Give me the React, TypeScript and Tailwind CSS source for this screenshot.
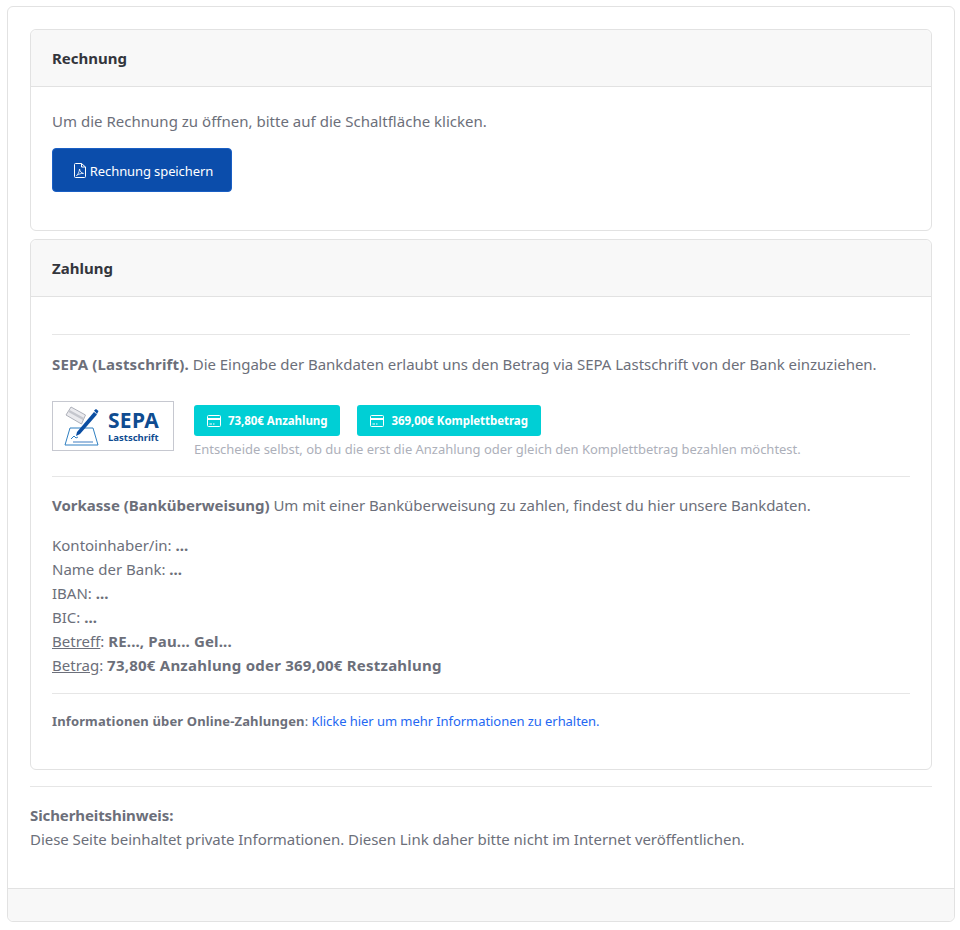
function FileIcon() {
  return (
    <svg width="12" height="15" viewBox="0 0 12 15" fill="none" stroke="currentColor" strokeWidth="1" className="shrink-0">
      <path d="M1.500 0.500h6l4 3.500v9.500a1 1 0 0 1-1 1h-9a1 1 0 0 1-1-1v-12a1 1 0 0 1 1-1z" />
      <path d="M7.500 0.500v3.500h4" />
      <path d="M2.500 12.500c1.500-1 2.800-3.500 3-6.500 .5 2.500 2 4.200 4 4.400-2-.2-5 .7-7 2.100z" strokeWidth="0.800" />
    </svg>
  );
}

function CardIcon() {
  return (
    <svg width="14" height="12" viewBox="0 0 14 12" fill="none" stroke="currentColor" className="shrink-0">
      <rect x="0.500" y="0.500" width="13" height="11" rx="1" />
      <path d="M1 4h12" strokeWidth="2" />
      <path d="M2.500 9h2.500M6 9h1.500" />
    </svg>
  );
}

function SepaLogo() {
  return (
    <div className="flex h-[50px] w-[122px] shrink-0 items-center border border-[#c6c8d0] bg-white">
      <svg width="55" height="48" viewBox="0 0 55 48" fill="none" className="shrink-0">
        <path d="M18 5l14.500 8-4 9L13 13z" fill="#eaeaee" stroke="#aeb1ba" />
        <path d="M16 9l14.500 8" stroke="#c4c6cd" strokeWidth="2.500" />
        <path d="M17 26h23l5 17H12z" fill="#fff" stroke="#2f7fc1" />
        <path d="M20 40h20" stroke="#7fa8d6" strokeWidth="1.500" />
        <path d="M23 34l1-4 17-20 3 2.500L27 32z" fill="#0b4ea2" />
        <path d="M41 8.500l2-1.500 2.500 2-1.500 3z" fill="#0b4ea2" />
        <path d="M18 37l3-3 2 2 2-1" stroke="#2f7fc1" />
      </svg>
      <div className="flex flex-col text-[#0f4c91]">
        <span className="h-[22px] text-[21px] leading-[22px] font-bold tracking-[0.3px]">SEPA</span>
        <span className="h-[13px] text-[9.500px] leading-[13px] font-bold">Lastschrift</span>
      </div>
    </div>
  );
}

function PayButton({ label }: { label: string }) {
  return (
    <button className="flex h-[31px] items-center gap-[7px] rounded-[3px] bg-[#00cfd5] px-[13px] text-[11.500px] font-bold tracking-[-0.05px] text-white">
      <CardIcon />
      {label}
    </button>
  );
}

export default function App() {
  return (
    <div className="h-[930px] bg-white pt-[6px] pr-[5px] pl-[7px] text-[15px] leading-[24px] text-[#6c6f7a] [font-family:'Noto_Sans',sans-serif]">
      <div className="flex h-[916px] flex-col rounded-[6px] border border-[#e2e2e2]">
        <div className="flex-1 px-[22px] pt-[22px]">
          <div className="h-[202px] rounded-[6px] border border-[#e2e2e2]">
            <div className="flex h-[57px] items-center rounded-t-[6px] border-b border-[#e2e2e2] bg-[#f8f8f8] px-[21px] text-[15px] font-bold text-[#33353c]">
              Rechnung
            </div>
            <div className="px-[21px] pt-[22px]">
              <p className="tracking-[0.015px]">Um die Rechnung zu öffnen, bitte auf die Schaltfläche klicken.</p>
              <button className="mt-[15px] flex h-[44px] w-[180px] items-center justify-center gap-[4px] rounded-[4px] border border-[#1a5fc4] bg-[#0b4dab] pt-[1px] pl-[3px] text-[13px] tracking-[-0.1px] text-white">
                <FileIcon />
                Rechnung speichern
              </button>
            </div>
          </div>

          <div className="mt-2 h-[531px] rounded-[6px] border border-[#e2e2e2]">
            <div className="flex h-[57px] items-center rounded-t-[6px] border-b border-[#e2e2e2] bg-[#f8f8f8] px-[21px] text-[15px] font-bold text-[#33353c]">
              Zahlung
            </div>
            <div className="px-[21px] pt-[37px]">
              <hr className="border-[#e6e6e6]" />
              <p className="mt-[17px] tracking-[-0.03px]">
                <b className="tracking-[0.16px]">SEPA (Lastschrift).</b> Die Eingabe der Bankdaten erlaubt uns den Betrag via SEPA Lastschrift von der Bank einzuziehen.
              </p>
              <div className="mt-[25px] flex gap-[20px]">
                <SepaLogo />
                <div className="pt-[4px]">
                  <div className="flex gap-[17px]">
                    <PayButton label="73,80€ Anzahlung" />
                    <PayButton label="369,00€ Komplettbetrag" />
                  </div>
                  <p className="mt-[1px] text-[13px] leading-[24px] tracking-[-0.02px] text-[#adb0ba]">
                    Entscheide selbst, ob du die erst die Anzahlung oder gleich den Komplettbetrag bezahlen möchtest.
                  </p>
                </div>
              </div>
              <hr className="mt-[15px] border-[#e6e6e6]" />
              <p className="mt-[16px] tracking-[-0.06px]">
                <b className="tracking-normal">Vorkasse (Banküberweisung)</b> Um mit einer Banküberweisung zu zahlen, findest du hier unsere Bankdaten.
              </p>
              <div className="mt-[16px]">
                <div>Kontoinhaber/in: <b>...</b></div>
                <div>Name der Bank: <b>...</b></div>
                <div>IBAN: <b>...</b></div>
                <div>BIC: <b>...</b></div>
                <div><u>Betreff</u>: <b className="tracking-[0.15px]">RE..., Pau... Gel...</b></div>
                <div><u>Betrag</u>: <b className="tracking-[0.23px]">73,80€ Anzahlung oder 369,00€ Restzahlung</b></div>
              </div>
              <hr className="mt-[16px] border-[#e6e6e6]" />
              <p className="mt-[15px] text-[13px]">
                <b className="tracking-[0.13px]">Informationen über Online-Zahlungen</b>: <a className="tracking-[-0.06px] text-[#2468f2]">Klicke hier um mehr Informationen zu erhalten.</a>
              </p>
            </div>
          </div>

          <hr className="mt-4 border-[#e6e6e6]" />
          <div className="mt-[16px] tracking-[-0.05px]">
            <b className="tracking-[-0.1px]">Sicherheitshinweis:</b>
            <p>Diese Seite beinhaltet private Informationen. Diesen Link daher bitte nicht im Internet veröffentlichen.</p>
          </div>
        </div>
        <div className="h-[33px] rounded-b-[6px] border-t border-[#e2e2e2] bg-[#f8f8f8]" />
      </div>
    </div>
  );
}
